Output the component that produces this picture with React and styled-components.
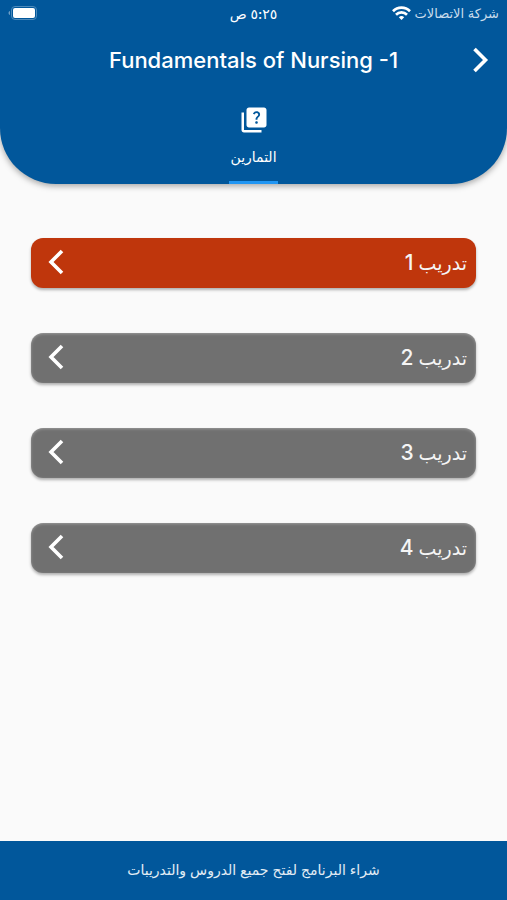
import React, { useState } from 'react';
import styled, { createGlobalStyle } from 'styled-components';
import { MdQuiz } from 'react-icons/md';


const GlobalStyle = createGlobalStyle`
    :root {
        --color-main: #01579b;
        --color-accent: #2196f3;
        --color-active: #bf360c;
        --color-locked: #707070;
        --color-page: #fafafa;
    }

    * {
        box-sizing: border-box;
    }

    body {
        margin: 0;
        background: var(--color-page);
        font-family: Inter, "DejaVu Sans", sans-serif;
    }

    button {
        border: none;
        padding: 0;
        font-family: inherit;
        color: inherit;
        cursor: pointer;
    }
`;

const Page = styled.div`
    display: flex;
    flex-direction: column;
    min-height: 100vh;
`;

const Header = styled.header`
    background: var(--color-main);
    color: #fff;
    border-radius: 0 0 56px 56px;
    box-shadow: 0 2px 6px rgba(0, 0, 0, 0.35);
`;

const StatusBar = styled.div`
    display: grid;
    grid-template-columns: 1fr auto 1fr;
    align-items: center;
    height: 26px;
    padding: 0 8px;
    font-size: 13px;
`;

const Carrier = styled.div`
    display: flex;
    align-items: center;
    gap: 4px;
    color: #c9dcec;
`;

const Time = styled.div`
    font-size: 14px;
    font-weight: 500;
`;

const Battery = styled.svg`
    justify-self: end;
`;

const TitleBar = styled.div`
    display: grid;
    grid-template-columns: 36px 1fr 36px;
    align-items: center;
    height: 68px;
    padding: 0 8px;
`;

const Title = styled.h1`
    grid-column: 2;
    margin: 0;
    text-align: center;
    font-size: 22px;
    font-weight: 500;
`;

const BackButton = styled.button`
    display: grid;
    place-items: center;
    height: 36px;
    background: none;
`;

const Tabs = styled.nav`
    display: flex;
    justify-content: center;
`;

const Tab = styled.button`
    display: flex;
    flex-direction: column;
    align-items: center;
    gap: 12px;
    height: 90px;
    padding: 11px 1px 0;
    background: none;
    border-bottom: 3px solid ${props => props.$active ? 'var(--color-accent)' : 'transparent'};
    font-size: 14px;
    line-height: 20px;
`;

const Exercises = styled.main`
    flex: 1;
    display: flex;
    flex-direction: column;
    gap: 45px;
    padding: 54px 31px;
`;

const Exercise = styled.button`
    display: flex;
    justify-content: space-between;
    align-items: center;
    height: 50px;
    padding: 0 9px 2px 17px;
    border-radius: 12px;
    background: ${props => props.$locked ? 'var(--color-locked)' : 'var(--color-active)'};
    box-shadow: 0 2px 3px rgba(0, 0, 0, 0.3)${props => props.$locked ? ', inset 0 1px 3px rgba(255, 255, 255, 0.3)' : ''};
    color: #f5f5f5;
    font-size: 19px;
    font-weight: 500;
`;

const Number = styled.span`
    font-size: 21px;
`;

const BuyButton = styled.button`
    height: 59px;
    padding-bottom: 2px;
    background: var(--color-main);
    color: #e3edf5;
    font-size: 14px;
`;


const Chevron = ({ back }) => (
    <svg width="16" height="26" viewBox="0 0 16 26" fill="none" stroke="#fff" strokeWidth="3.6" aria-hidden="true">
        <path d={back ? 'M1.5 2L12.5 13L1.5 24' : 'M14 2L3 13L14 24'} />
    </svg>
);

const Wifi = () => (
    <svg width="19" height="14" viewBox="0 0 19 14" fill="none" stroke="#fff" strokeWidth="2.7" aria-hidden="true">
        <path d="M1 5.2A12 12 0 0 1 18 5.2" />
        <path d="M4 8.7A7.8 7.8 0 0 1 15 8.7" />
        <path d="M9.5 14L6.8 11.2A3.9 3.9 0 0 1 12.2 11.2Z" fill="#fff" stroke="none" />
    </svg>
);

const exercises = [
    { id: 1, locked: false },
    { id: 2, locked: true },
    { id: 3, locked: true },
    { id: 4, locked: true }
];

const App = () => {
    const [tab, setTab] = useState('exercises');

    return (
        <>
            <GlobalStyle />
            <Page dir="rtl" lang="ar">
                <Header>
                    <StatusBar>
                        <Carrier>
                            <span>شركة الاتصالات</span>
                            <Wifi />
                        </Carrier>
                        <Time>٥:٢٥ ص</Time>
                        <Battery width="30" height="14" viewBox="0 0 30 14" aria-hidden="true">
                            <rect x="3.5" y="0.5" width="25" height="13" rx="3.5" fill="none" stroke="#4d8abb" />
                            <rect x="5" y="2" width="22" height="10" rx="2" fill="#fff" />
                            <path d="M2 5C0 5.5 0 8.5 2 9Z" fill="#6f9fc6" />
                        </Battery>
                    </StatusBar>
                    <TitleBar>
                        <BackButton aria-label="رجوع">
                            <Chevron back />
                        </BackButton>
                        <Title dir="ltr">Fundamentals of Nursing -1</Title>
                    </TitleBar>
                    <Tabs>
                        <Tab $active={tab === 'exercises'} onClick={() => setTab('exercises')}>
                            <MdQuiz size={30} />
                            <span>التمارين</span>
                        </Tab>
                    </Tabs>
                </Header>
                <Exercises>
                    {
                        exercises.map(exercise => (
                            <Exercise key={exercise.id} $locked={exercise.locked}>
                                <span>تدريب <Number>{exercise.id}</Number></span>
                                <Chevron />
                            </Exercise>
                        ))
                    }
                </Exercises>
                <BuyButton>شراء البرنامج لفتح جميع الدروس والتدريبات</BuyButton>
            </Page>
        </>
    )
}

export default App;
